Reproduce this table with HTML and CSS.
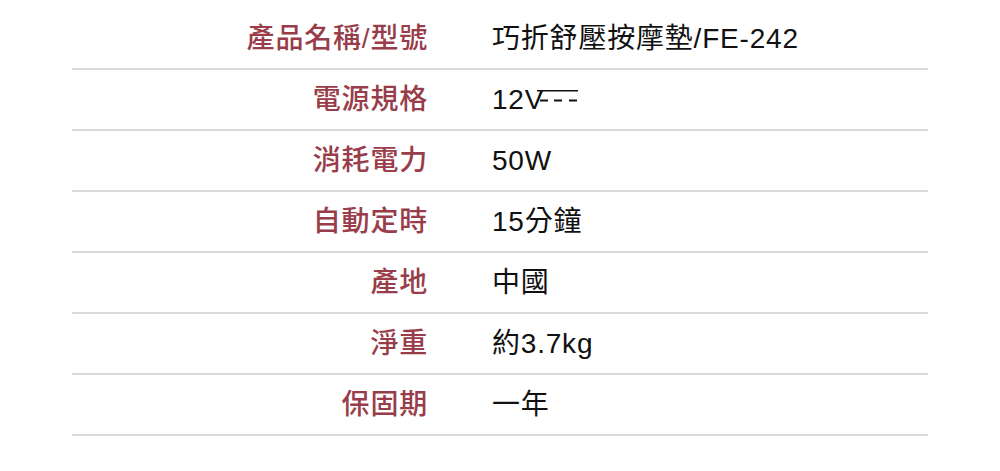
FILE: index.html
```html
<!DOCTYPE html>
<html lang="zh-Hant">
<head>
<meta charset="utf-8">
<title>規格</title>
<link rel="stylesheet" href="styles.css">
</head>
<body>
<div class="spec">
  <div class="row"><div class="label">產品名稱/型號</div><div class="value">巧折舒壓按摩墊/FE-242</div></div>
  <div class="row"><div class="label">電源規格</div><div class="value">12V<svg class="dc" width="42" height="18" viewBox="0 0 42 18"><rect x="0" y="2" width="41" height="1.5" fill="#111"/><rect x="3" y="11.5" width="8" height="2" fill="#111"/><rect x="17" y="11.5" width="8" height="2" fill="#111"/><rect x="32" y="11.5" width="8" height="2" fill="#111"/></svg></div></div>
  <div class="row"><div class="label">消耗電力</div><div class="value">50W</div></div>
  <div class="row"><div class="label">自動定時</div><div class="value">15分鐘</div></div>
  <div class="row"><div class="label">產地</div><div class="value">中國</div></div>
  <div class="row"><div class="label">淨重</div><div class="value">約3.7kg</div></div>
  <div class="row"><div class="label">保固期</div><div class="value">一年</div></div>
</div>
</body>
</html>
```

FILE: styles.css
```css
html, body {
  margin: 0;
  padding: 0;
  background: #ffffff;
}

body {
  font-family: "Liberation Sans", "Noto Sans CJK TC", sans-serif;
}

.spec {
  width: 856px;
  margin: 0 auto;
  padding-top: 9px;
}

.row {
  display: grid;
  grid-template-columns: 356px 1fr;
  align-items: center;
  height: 59px;
  border-bottom: 2px solid #dadada;
}

.label {
  text-align: right;
  color: #983d49;
  font-size: 28px;
  font-weight: 500;
  letter-spacing: 0.8px;
  line-height: 1;
}

.value {
  padding-left: 64px;
  color: #111111;
  font-size: 28px;
  font-weight: 400;
  letter-spacing: 0.8px;
  line-height: 1;
  display: flex;
  align-items: center;
}

.dc {
  margin-left: -7px;
  margin-top: -5px;
}
```
